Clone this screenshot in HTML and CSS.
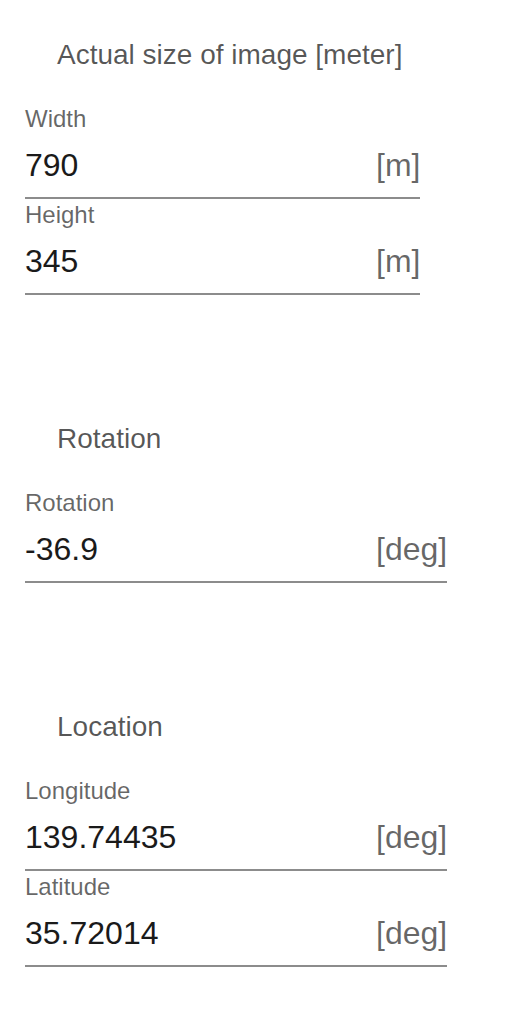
FILE: index.html
```html
<!DOCTYPE html>
<html>
<head>
<meta charset="utf-8">
<link rel="stylesheet" href="styles.css">
</head>
<body>
<div class="panel">
  <section class="group">
    <h2 class="group-title">Actual size of image [meter]</h2>
    <div class="field">
      <label class="field-label">Width</label>
      <div class="field-input">
        <span class="field-value">790</span>
        <span class="field-unit">[m]</span>
      </div>
    </div>
    <div class="field">
      <label class="field-label">Height</label>
      <div class="field-input">
        <span class="field-value">345</span>
        <span class="field-unit">[m]</span>
      </div>
    </div>
  </section>
  <section class="group">
    <h2 class="group-title">Rotation</h2>
    <div class="field">
      <label class="field-label">Rotation</label>
      <div class="field-input">
        <span class="field-value">-36.9</span>
        <span class="field-unit">[deg]</span>
      </div>
    </div>
  </section>
  <section class="group">
    <h2 class="group-title">Location</h2>
    <div class="field">
      <label class="field-label">Longitude</label>
      <div class="field-input">
        <span class="field-value">139.74435</span>
        <span class="field-unit">[deg]</span>
      </div>
    </div>
    <div class="field">
      <label class="field-label">Latitude</label>
      <div class="field-input">
        <span class="field-value">35.72014</span>
        <span class="field-unit">[deg]</span>
      </div>
    </div>
  </section>
</div>
</body>
</html>
```
FILE: styles.css
```css
html, body {
  margin: 0;
  padding: 0;
  background: #ffffff;
}
body {
  font-family: "Liberation Sans", Arial, Helvetica, sans-serif;
}
.panel {
  display: flex;
  flex-direction: column;
  gap: 124px;
  padding: 35px 0 0 25px;
}
.group {
  display: flex;
  flex-direction: column;
  align-items: flex-start;
}
.group-title {
  margin: 0 0 28px 0;
  padding-left: 32px;
  font-size: 28px;
  line-height: 40px;
  font-weight: 400;
  color: rgba(0, 0, 0, 0.66);
}
.field {
  display: flex;
  flex-direction: column;
  height: 96px;
  box-sizing: border-box;
  padding-top: 2px;
}
.field-label {
  font-size: 24px;
  line-height: 28px;
  color: rgba(0, 0, 0, 0.6);
}
.field-input {
  display: flex;
  align-items: baseline;
  border-bottom: 2px solid rgba(0, 0, 0, 0.45);
  padding: 9px 0 9px 0;
}
.field-value {
  width: 335px;
  font-size: 32px;
  line-height: 46px;
  color: #1a1a1a;
}
.field-unit {
  margin-left: 16px;
  font-size: 32px;
  line-height: 46px;
  color: rgba(0, 0, 0, 0.6);
}
```
